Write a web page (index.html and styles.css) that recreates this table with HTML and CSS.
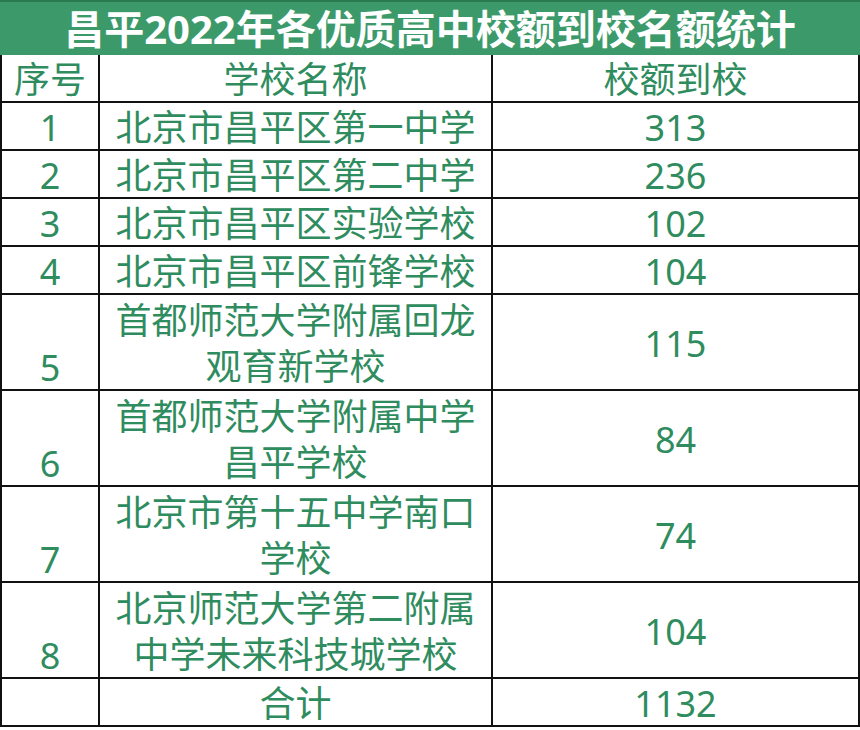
FILE: index.html
```html
<!DOCTYPE html>
<html lang="zh-CN">
<head>
<meta charset="utf-8">
<title>昌平2022年各优质高中校额到校名额统计</title>
<link rel="stylesheet" href="styles.css">
</head>
<body>
<div class="sheet">
  <div class="title">昌平2022年各优质高中校额到校名额统计</div>
  <div class="stats" role="table">
    <div class="cell no">序号</div><div class="cell">学校名称</div><div class="cell">校额到校</div>
    <div class="cell no">1</div><div class="cell">北京市昌平区第一中学</div><div class="cell">313</div>
    <div class="cell no">2</div><div class="cell">北京市昌平区第二中学</div><div class="cell">236</div>
    <div class="cell no">3</div><div class="cell">北京市昌平区实验学校</div><div class="cell">102</div>
    <div class="cell no">4</div><div class="cell">北京市昌平区前锋学校</div><div class="cell">104</div>
    <div class="cell no">5</div><div class="cell">首都师范大学附属回龙<br>观育新学校</div><div class="cell">115</div>
    <div class="cell no">6</div><div class="cell">首都师范大学附属中学<br>昌平学校</div><div class="cell">84</div>
    <div class="cell no">7</div><div class="cell">北京市第十五中学南口<br>学校</div><div class="cell">74</div>
    <div class="cell no">8</div><div class="cell">北京师范大学第二附属<br>中学未来科技城学校</div><div class="cell">104</div>
    <div class="cell no"></div><div class="cell">合计</div><div class="cell">1132</div>
  </div>
</div>
</body>
</html>
```
FILE: styles.css
```css
html, body {
  margin: 0;
  padding: 0;
  background: #ffffff;
}
.sheet {
  width: 860px;
  font-family: "Noto Sans", "Noto Sans CJK SC", sans-serif;
}
.title {
  height: 53px;
  border-top: 2px solid #2a7a50;
  background: #3c9a6a;
  color: #ffffff;
  font-weight: 700;
  font-size: 40px;
  line-height: 53px;
  text-align: center;
  white-space: nowrap;
}
.stats {
  display: grid;
  grid-template-columns: 100px 393px 367px;
  grid-template-rows: 48px repeat(4, 48px) repeat(4, 96px) 48px;
  color: #2f8c5e;
}
.cell {
  box-sizing: border-box;
  padding-top: 4px;
  border-right: 2px solid #111111;
  border-bottom: 2px solid #111111;
  display: flex;
  align-items: center;
  justify-content: center;
  text-align: center;
  font-size: 36px;
  line-height: 46px;
  white-space: nowrap;
}
.cell.no {
  border-left: 2px solid #111111;
  align-items: flex-end;
  line-height: 42px;
}
```
